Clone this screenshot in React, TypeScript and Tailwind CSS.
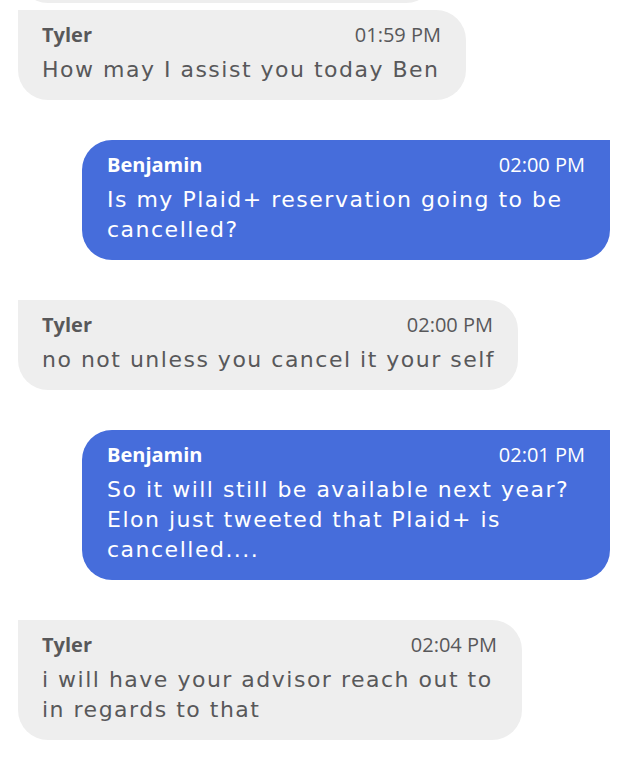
import React from "react";

type Msg = {
  name: string;
  time: string;
  lines: string[];
  me: boolean;
  width: string;
};

const msgs: Msg[] = [
  { name: "Tyler", time: "01:59 PM", lines: ["How may I assist you today Ben"], me: false, width: "w-[448px]" },
  { name: "Benjamin", time: "02:00 PM", lines: ["Is my Plaid+ reservation going to be", "cancelled?"], me: true, width: "w-[528px]" },
  { name: "Tyler", time: "02:00 PM", lines: ["no not unless you cancel it your self"], me: false, width: "w-[500px]" },
  {
    name: "Benjamin",
    time: "02:01 PM",
    lines: ["So it will still be available next year?", "Elon just tweeted that Plaid+ is", "cancelled...."],
    me: true,
    width: "w-[528px]",
  },
  { name: "Tyler", time: "02:04 PM", lines: ["i will have your advisor reach out to", "in regards to that"], me: false, width: "w-[504px]" },
];

function Bubble({ m }: { m: Msg }) {
  const shell = m.me
    ? "self-end mr-[12px] bg-[#466ddb] text-white rounded-[30px] rounded-tr-none"
    : "self-start ml-[18px] bg-[#eeeeee] text-[#58585a] rounded-[30px] rounded-tl-none";
  return (
    <div className={`${shell} ${m.width} pt-[12px] pb-[15px] ${m.me ? "pl-[25px]" : "pl-[24px]"} pr-[25px] flex flex-col`}>
      <div className="flex items-center justify-between h-[26px]">
        <span className="font-['Open_Sans',sans-serif] font-bold text-[20px] leading-[26px]">{m.name}</span>
        <span className="font-['Open_Sans',sans-serif] text-[20px] leading-[26px]">{m.time}</span>
      </div>
      <div className="mt-[7px] font-['DejaVu_Sans',sans-serif] text-[22px] leading-[30px] tracking-[1.5px]">
        {m.lines.map((l, i) => (
          <div key={i} className="whitespace-nowrap">
            {l}
          </div>
        ))}
      </div>
    </div>
  );
}

export default function App() {
  return (
    <div className="w-[622px] h-[758px] overflow-hidden bg-white flex flex-col">
      <div className="self-start ml-[18px] w-[418px] h-[90px] -mt-[87px] bg-[#eeeeee] rounded-[30px] rounded-tl-none shrink-0" />
      <div className="flex flex-col gap-[40px] mt-[7px]">
        {msgs.map((m, i) => (
          <Bubble key={i} m={m} />
        ))}
      </div>
    </div>
  );
}
